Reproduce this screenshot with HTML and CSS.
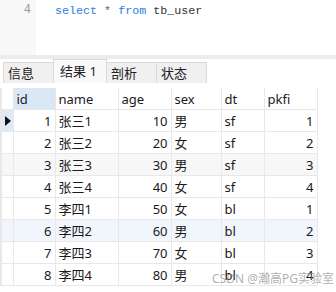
FILE: index.html
```html
<!DOCTYPE html>
<html lang="zh">
<head>
    <meta charset="UTF-8">
    <title>tb_user</title>
    <link rel="stylesheet" href="styles.css">
</head>
<body>
    <div class="editor">
        <div class="gutter">4</div>
        <div class="code"><span class="kw">select</span> <span class="op">*</span> <span class="kw">from</span> <span class="id">tb_user</span></div>
    </div>
    <div class="split"></div>

    <div class="tabs">
        <div class="tab">信息</div>
        <div class="tab active">结果 1</div>
        <div class="tab">剖析</div>
        <div class="tab">状态</div>
    </div>

    <div class="grid-wrap">
        <table class="grid">
            <colgroup>
                <col style="width: 12px">
                <col style="width: 42px">
                <col style="width: 63px">
                <col style="width: 53px">
                <col style="width: 50px">
                <col style="width: 43px">
                <col style="width: 53px">
            </colgroup>
            <thead>
                <tr>
                    <th class="ind"></th>
                    <th class="sel">id</th>
                    <th>name</th>
                    <th>age</th>
                    <th>sex</th>
                    <th>dt</th>
                    <th>pkfi</th>
                </tr>
            </thead>
            <tbody>
                <tr class="current">
                    <td class="ind"><span class="arrow"></span></td>
                    <td class="num">1</td><td>张三1</td><td class="num">10</td><td>男</td><td>sf</td><td class="num">1</td>
                </tr>
                <tr>
                    <td class="ind"></td>
                    <td class="num">2</td><td>张三2</td><td class="num">20</td><td>女</td><td>sf</td><td class="num">2</td>
                </tr>
                <tr class="alt">
                    <td class="ind"></td>
                    <td class="num">3</td><td>张三3</td><td class="num">30</td><td>男</td><td>sf</td><td class="num">3</td>
                </tr>
                <tr>
                    <td class="ind"></td>
                    <td class="num">4</td><td>张三4</td><td class="num">40</td><td>女</td><td>sf</td><td class="num">4</td>
                </tr>
                <tr>
                    <td class="ind"></td>
                    <td class="num">5</td><td>李四1</td><td class="num">50</td><td>女</td><td>bl</td><td class="num">1</td>
                </tr>
                <tr class="hover">
                    <td class="ind"></td>
                    <td class="num">6</td><td>李四2</td><td class="num">60</td><td>男</td><td>bl</td><td class="num">2</td>
                </tr>
                <tr>
                    <td class="ind"></td>
                    <td class="num">7</td><td>李四3</td><td class="num">70</td><td>女</td><td>bl</td><td class="num">3</td>
                </tr>
                <tr>
                    <td class="ind"></td>
                    <td class="num">8</td><td>李四4</td><td class="num">80</td><td>男</td><td>bl</td><td class="num">4</td>
                </tr>
            </tbody>
        </table>
        <div class="mark">CSDN @瀚高PG实验室</div>
    </div>
</body>
</html>
```

FILE: styles.css
```css
body {
    margin: 0;
    background: #ffffff;
    font-family: "Noto Sans", "Noto Sans CJK SC", sans-serif;
    font-size: 13px;
    color: #1a1a1a;
    width: 336px;
    height: 292px;
    overflow: hidden;
}

/* query editor */
.editor {
    display: flex;
    height: 55px;
}

.gutter {
    width: 31px;
    padding-right: 5px;
    padding-top: 1px;
    background: #f8f8f8;
    color: #9a9a9a;
    text-align: right;
    font-family: "Liberation Mono", monospace;
    font-size: 12px;
    line-height: 18px;
}

.code {
    padding-left: 19px;
    padding-top: 2px;
    font-family: "Liberation Mono", monospace;
    font-size: 11.7px;
    line-height: 18px;
    white-space: pre;
}

.kw { color: #2a7de1; }
.op { color: #666666; }
.id { color: #333333; }

.split {
    height: 4px;
    background: #ececec;
}

/* result tabs */
.tabs {
    display: flex;
    align-items: flex-end;
    height: 24px;
    padding-left: 3px;
}

.tab {
    width: 45px;
    height: 20px;
    line-height: 20px;
    padding-left: 4px;
    background: #f0f0f0;
    border: 1px solid #dadada;
    border-bottom: none;
    margin-right: -1px;
    color: #222222;
}

.tab.active {
    width: 46px;
    height: 23px;
    line-height: 23px;
    padding-left: 6px;
    background: #f9f9f9;
}

/* data grid */
.grid-wrap {
    position: relative;
    padding-top: 5px;
}

.grid {
    border-collapse: collapse;
    table-layout: fixed;
    width: 316px;
}

.grid th,
.grid td {
    height: 21px;
    padding: 0 3px;
    border: 1px solid #e8e8e8;
    font-weight: normal;
    text-align: left;
    white-space: nowrap;
    overflow: hidden;
}

.grid th {
    border-top: none;
}

.grid th.sel {
    background: #dae8f6;
}

.grid td.num {
    text-align: right;
}

.grid .ind {
    padding: 0;
    border-left: 2px solid #e8e8e8;
}

.grid tr.current .ind {
    background: #dfeaf7;
}

.grid tr.alt td {
    background: #f7f7f7;
}

.grid tr.hover td {
    background: #f1f6fc;
}

.arrow {
    display: block;
    width: 0;
    height: 0;
    margin-left: 3px;
    border-top: 5px solid transparent;
    border-bottom: 5px solid transparent;
    border-left: 6px solid #111111;
}

.mark {
    position: absolute;
    right: 2px;
    bottom: 0px;
    color: rgba(140, 140, 140, 0.7);
    font-size: 12px;
    line-height: 14px;
}
```
